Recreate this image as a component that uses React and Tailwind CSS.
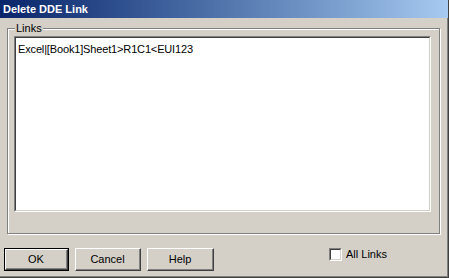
export default function App() {
  const font = { fontFamily: '"Liberation Sans", Arial, sans-serif' };
  return (
    <div className="w-[449px] h-[278px] bg-[#d4d0c8] flex flex-col border-r border-b border-[#404040] text-[11px] text-black" style={font}>
      <div className="h-[18px] flex items-center pl-[3px] bg-gradient-to-r from-[#0a246a] to-[#a6caf0] text-white font-bold text-[11px] leading-none">
        Delete DDE Link
      </div>
      <div className="flex-1 border-r border-b border-[#808080] flex flex-col">
        <div className="relative ml-[7px] mt-[10px] w-[433px] h-[206px] border border-[#808080] shadow-[inset_1px_1px_0_#ffffff,1px_1px_0_#ffffff]">
          <div className="absolute left-[7px] -top-[8px] px-[1px] bg-[#d4d0c8] leading-[14px]">Links</div>
          <div className="ml-[6px] mt-[7px] w-[417px] h-[176px] border-t border-l border-[#808080] border-r border-b border-r-white border-b-white">
            <div className="w-full h-full border-t border-l border-[#404040] border-r border-b border-r-[#d4d0c8] border-b-[#d4d0c8] bg-white pl-[2px] pt-[5px] leading-[13px] tracking-[-0.15px]">
              Excel|[Book1]Sheet1&gt;R1C1&lt;EUI123
            </div>
          </div>
        </div>
        <div className="flex items-start mt-[14px] ml-[4px]">
          <div className="w-[65px] h-[23px] border border-black">
            <div className="w-full h-full border-t border-l border-white border-r border-b border-r-[#404040] border-b-[#404040] flex items-center justify-center">
              <div className="w-full h-full border-r border-b border-[#808080] flex items-center justify-center">OK</div>
            </div>
          </div>
          <div className="ml-[6px] w-[66px] h-[23px] border-t border-l border-white border-r border-b border-r-[#404040] border-b-[#404040]">
            <div className="w-full h-full border-r border-b border-[#808080] flex items-center justify-center">Cancel</div>
          </div>
          <div className="ml-[6px] w-[67px] h-[23px] border-t border-l border-white border-r border-b border-r-[#404040] border-b-[#404040]">
            <div className="w-full h-full border-r border-b border-[#808080] flex items-center justify-center">Help</div>
          </div>
          <div className="ml-[115px] flex items-center h-[13px]">
            <div className="w-[13px] h-[13px] border-t border-l border-[#808080] border-r border-b border-r-white border-b-white">
              <div className="w-full h-full border-t border-l border-[#404040] border-r border-b border-r-[#d4d0c8] border-b-[#d4d0c8] bg-white"></div>
            </div>
            <span className="ml-[4px] leading-[13px]">All Links</span>
          </div>
        </div>
      </div>
    </div>
  );
}
